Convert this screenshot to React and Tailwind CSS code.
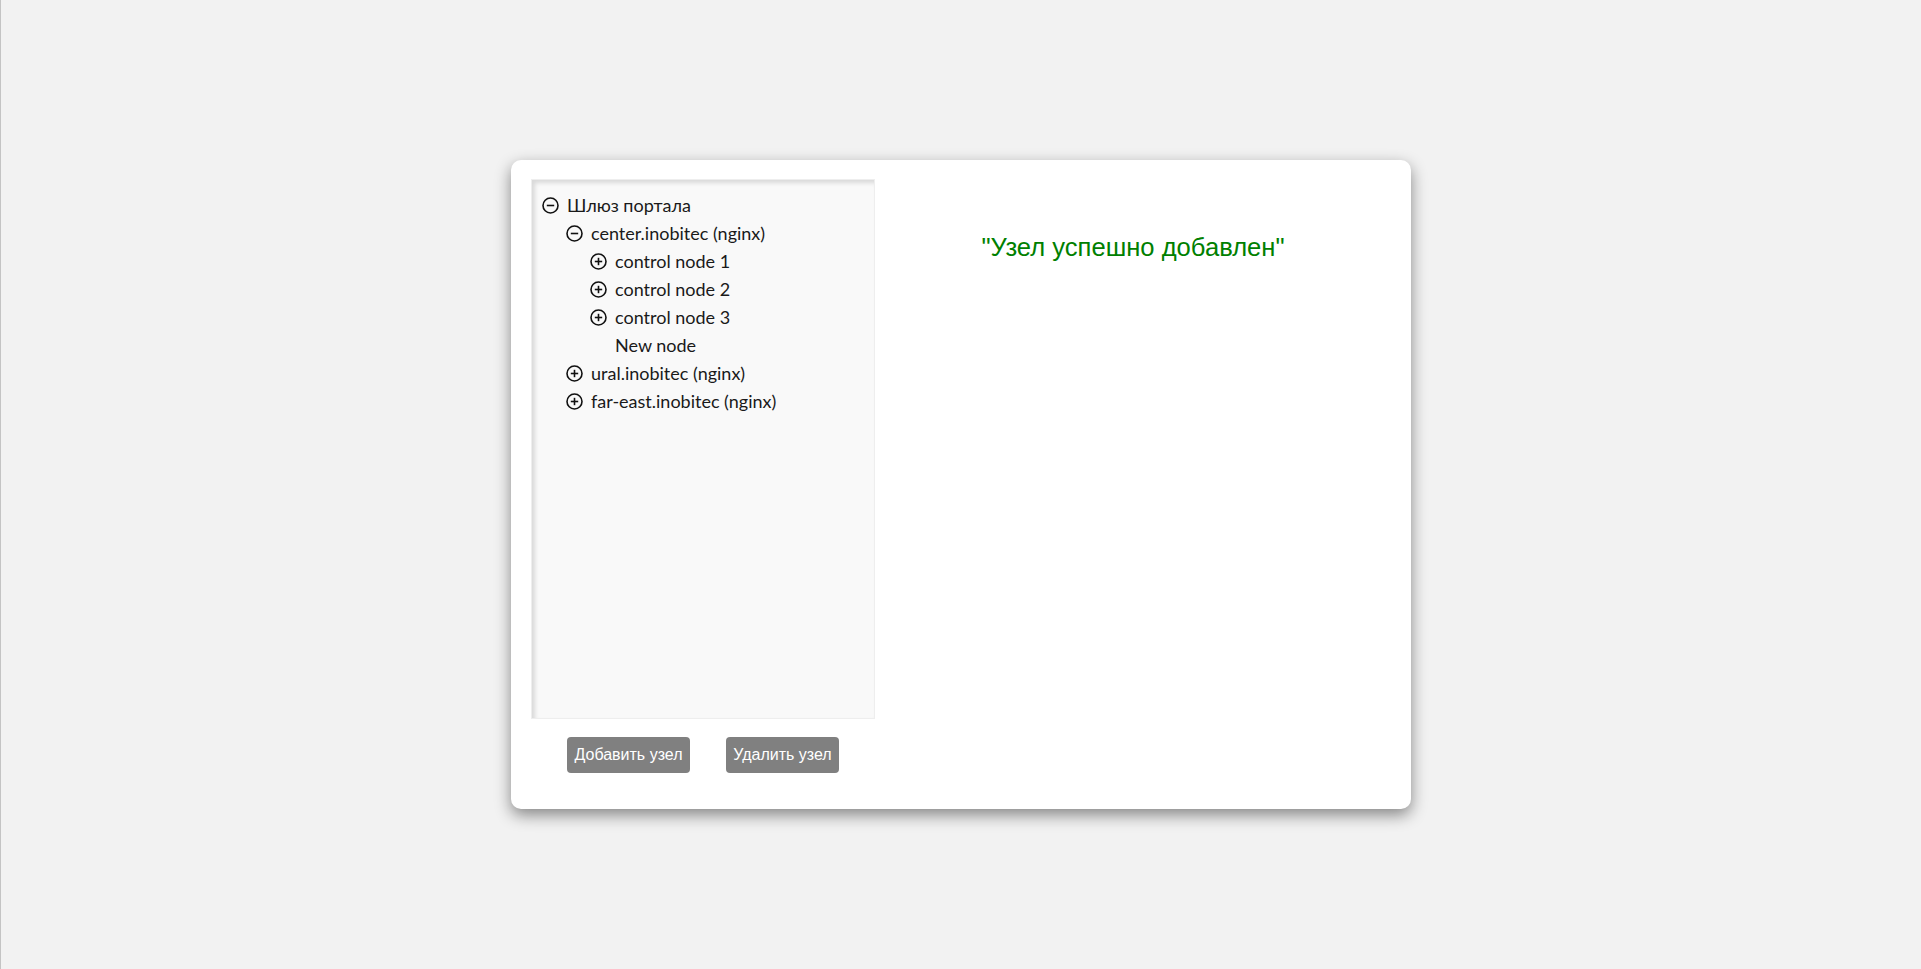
import { useState } from 'react';

const tree = [
    {
        id: 'root', label: 'Шлюз портала', open: true, children: [
            {
                id: 'center', label: 'center.inobitec (nginx)', open: true, children: [
                    { id: 'c1', label: 'control node 1', children: [{ id: 'x1', label: '' }] },
                    { id: 'c2', label: 'control node 2', children: [{ id: 'x2', label: '' }] },
                    { id: 'c3', label: 'control node 3', children: [{ id: 'x3', label: '' }] },
                    { id: 'new', label: 'New node' },
                ]
            },
            { id: 'ural', label: 'ural.inobitec (nginx)', children: [{ id: 'u1', label: '' }] },
            { id: 'fe', label: 'far-east.inobitec (nginx)', children: [{ id: 'f1', label: '' }] },
        ]
    }
];

const Toggle = ({ open }) => (
    <svg width="17" height="17" viewBox="0 0 17 17" className="shrink-0">
        <circle cx="8.5" cy="8.5" r="7.5" fill="none" stroke="#111" strokeWidth="1.6" />
        <line x1="4.8" y1="8.5" x2="12.2" y2="8.5" stroke="#111" strokeWidth="1.6" />
        {!open && <line x1="8.5" y1="4.8" x2="8.5" y2="12.2" stroke="#111" strokeWidth="1.6" />}
    </svg>
);

const Node = ({ node, depth }) => {
    const [open, setOpen] = useState(!!node.open);
    const hasKids = node.children && node.children.length > 0;
    return (
        <li>
            <div
                className="flex items-center gap-[8px] h-[28px] cursor-pointer"
                style={{ paddingLeft: depth * 24 }}
                onClick={() => hasKids && setOpen(!open)}
            >
                {hasKids ? <Toggle open={open} /> : <span className="w-[17px] shrink-0" />}
                <span>{node.label}</span>
            </div>
            {hasKids && open && (
                <ul>
                    {node.children.map(c => <Node key={c.id} node={c} depth={depth + 1} />)}
                </ul>
            )}
        </li>
    );
};

export default function App() {
    return (
        <div className="h-screen bg-[#f2f2f2] border-l border-[#c4c4c4] flex items-center justify-center">
            <div className="w-[900px] h-[649px] bg-white rounded-[10px] shadow-[0_6px_16px_rgba(0,0,0,0.45)] pt-[19px] px-[20px] flex">
                <div className="w-[344px] flex flex-col">
                    <div className="h-[540px] bg-[#f9f9f9] border border-[#eeeeee] shadow-[inset_3px_3px_4px_rgba(0,0,0,0.13)] pl-[10px] pt-[11px]">
                        <ul className="text-[18px] text-[#1a1a1a] font-['Lato',sans-serif]">
                            {tree.map(n => <Node key={n.id} node={n} depth={0} />)}
                        </ul>
                    </div>
                    <div className="flex gap-[36px] pl-[36px] mt-[18px] font-['Liberation_Sans',Arial,sans-serif] text-[16px]">
                        <button className="h-[36px] px-[6px] w-[123px] bg-[#808080] text-white rounded-[4px]">Добавить узел</button>
                        <button className="h-[36px] px-[6px] w-[113px] bg-[#808080] text-white rounded-[4px]">Удалить узел</button>
                    </div>
                </div>
                <div className="flex-1 flex justify-center pt-[53px]">
                    <p className="text-[25.6px] leading-[30px] text-[#008000] font-['Liberation_Sans',Arial,sans-serif]">"Узел успешно добавлен"</p>
                </div>
            </div>
        </div>
    );
}
